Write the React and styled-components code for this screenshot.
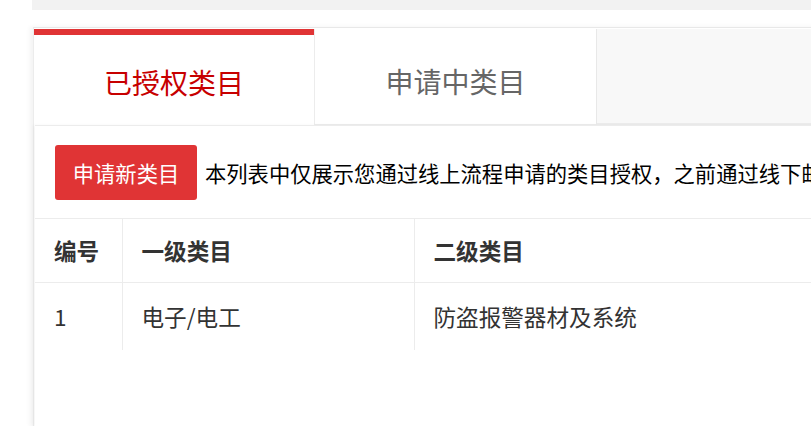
import React from 'react';
import styled, { createGlobalStyle } from 'styled-components';

const GlobalStyle = createGlobalStyle`
  html, body {
    margin: 0;
    padding: 0;
    background: #fff;
    overflow: hidden;
    font-family: "Noto Sans CJK SC", "Noto Sans", sans-serif;
  }
`;

const Page = styled.div`
  padding-left: 32px;
  min-height: 426px;
`;

const TopStrip = styled.div`
  height: 10px;
  background-color: #f2f2f2;
  margin-bottom: 17px;
`;

const Wrapper = styled.div`
  margin-left: 1px;
  border-top: 1px solid #e8e8e8;
  border-left: 1px solid #ececec;
  box-shadow: -3px 0 5px rgba(0, 0, 0, 0.05);
  min-height: 399px;
  width: 1100px;
  display: flex;
  flex-direction: column;
`;

const TabBar = styled.div`
  display: flex;
  padding-top: 1px;
  height: 96px;
`;

const Tab = styled.div`
  width: ${(p) => p.$width}px;
  display: flex;
  align-items: center;
  justify-content: center;
  padding-top: ${(p) => (p.$active ? 3 : 9)}px;
  box-sizing: border-box;
  font-size: 28px;
  color: ${(p) => (p.$active ? '#c70000' : '#666')};
  background: #fff;
  border-top: ${(p) => (p.$active ? '6px solid #e03435' : 'none')};
  border-left: ${(p) => (p.$active ? 'none' : '1px solid #ececec')};
  border-bottom: ${(p) => (p.$active ? 'none' : '1px solid #ececec')};
  cursor: pointer;
`;

const TabFill = styled.div`
  flex: 1;
  background: #f8f8f8;
  border-left: 1px solid #e8e8e8;
  border-bottom: 2px solid #ececec;
  box-sizing: border-box;
`;

const Panel = styled.div`
  flex: 1;
  margin-left: 1px;
  border-top: 1px solid #ececec;
  background: #fff;
  box-shadow: -2px 0 3px rgba(0, 0, 0, 0.04);
  overflow: hidden;
`;

const Toolbar = styled.div`
  display: flex;
  align-items: center;
  gap: 8px;
  padding: 19px 20px 18px;
`;

const Button = styled.button`
  width: 142px;
  height: 55px;
  flex-shrink: 0;
  border: none;
  border-radius: 3px;
  background-color: #e03435;
  color: #fff;
  font-family: inherit;
  font-size: 21.3px;
  cursor: pointer;
  padding: 0;
`;

const Notice = styled.span`
  font-size: 21.3px;
  color: #000;
  white-space: nowrap;
`;

const Table = styled.table`
  border-collapse: collapse;
  table-layout: fixed;
  width: 100%;
  font-size: 22.6px;
  color: #333;
`;

const Th = styled.th`
  width: ${(p) => (p.$width ? `${p.$width}px` : 'auto')};
  height: 64px;
  padding: 0 0 0 19px;
  text-align: left;
  font-weight: 700;
  border-top: 1px solid #ececec;
  border-bottom: 1px solid #ececec;
  border-right: 1px solid #ececec;
  box-sizing: border-box;
`;

const Td = styled.td`
  height: 67px;
  padding: 0 0 0 19px;
  border-right: 1px solid #ececec;
  box-sizing: border-box;
`;

const rows = [{ id: 1, first: '电子/电工', second: '防盗报警器材及系统' }];

const App = () => {
  return (
    <>
      <GlobalStyle />
      <Page>
        <TopStrip />
        <Wrapper>
          <TabBar>
            <Tab $active $width={280}>已授权类目</Tab>
            <Tab $width={282}>申请中类目</Tab>
            <TabFill />
          </TabBar>
          <Panel>
            <Toolbar>
              <Button>申请新类目</Button>
              <Notice>本列表中仅展示您通过线上流程申请的类目授权，之前通过线下邮件申请的类目请联系客服</Notice>
            </Toolbar>
            <Table>
              <thead>
                <tr>
                  <Th $width={87}>编号</Th>
                  <Th $width={292}>一级类目</Th>
                  <Th>二级类目</Th>
                </tr>
              </thead>
              <tbody>
                {rows.map((r) => (
                  <tr key={r.id}>
                    <Td>{r.id}</Td>
                    <Td>{r.first}</Td>
                    <Td>{r.second}</Td>
                  </tr>
                ))}
              </tbody>
            </Table>
          </Panel>
        </Wrapper>
      </Page>
    </>
  );
};

export default App;
